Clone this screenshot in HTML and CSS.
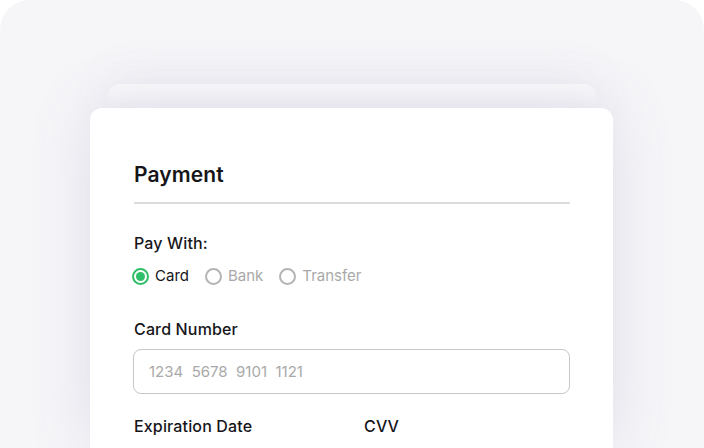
FILE: index.html
```html
<!DOCTYPE html>
<html>
<head>
<meta charset="utf-8">
<link rel="stylesheet" href="styles.css">
</head>
<body>
<div class="stage">
  <div class="card-back"></div>
  <div class="card">
    <h1 class="title">Payment</h1>
    <div class="divider"></div>
    <div class="label pay-label">Pay With:</div>
    <div class="radios">
      <span class="radio checked"><span class="dot"></span><span class="rtext">Card</span></span>
      <span class="radio"><span class="dot"></span><span class="rtext">Bank</span></span>
      <span class="radio"><span class="dot"></span><span class="rtext">Transfer</span></span>
    </div>
    <div class="label num-label">Card Number</div>
    <div class="input"><span class="placeholder">1234&nbsp; 5678&nbsp; 9101&nbsp; 1121</span></div>
    <div class="row">
      <div class="label exp">Expiration Date</div>
      <div class="label">CVV</div>
    </div>
  </div>
</div>
</body>
</html>
```
FILE: styles.css
```css
html, body {
  margin: 0;
  padding: 0;
  background: #ffffff;
}
body {
  font-family: Inter, "Noto Sans", sans-serif;
  color: #16161a;
}
.stage {
  width: 704px;
  height: 448px;
  background: #f6f6f9;
  border-radius: 30px 30px 0 0;
  overflow: hidden;
  display: flex;
  flex-direction: column;
  align-items: center;
  padding-top: 84px;
  box-sizing: border-box;
}
.card-back {
  width: 488px;
  height: 24px;
  flex: none;
  border-radius: 12px 12px 0 0;
  background: linear-gradient(#fafafc, #f3f3f7);
  box-shadow: 0 0 50px rgba(110, 100, 150, 0.12);
}
.card {
  width: 523px;
  flex: 1;
  margin-left: -1px;
  background: #ffffff;
  border-radius: 12px 12px 0 0;
  box-shadow: 0 0 60px rgba(110, 100, 150, 0.17);
  padding: 53px 43px 0 44px;
  box-sizing: border-box;
  display: flex;
  flex-direction: column;
}
.title {
  margin: 0;
  font-size: 21px;
  line-height: 28px;
  font-weight: 600;
  letter-spacing: 0.1px;
}
.divider {
  height: 2px;
  background: #dcdcdc;
  margin-top: 13px;
}
.label {
  font-size: 16px;
  line-height: 20px;
  font-weight: 500;
  letter-spacing: 0.15px;
}
.pay-label {
  margin-top: 29px;
}
.radios {
  display: flex;
  gap: 16px;
  margin-top: 13px;
  margin-left: -2px;
}
.radio {
  display: flex;
  align-items: center;
  gap: 6px;
  font-size: 15px;
  line-height: 20px;
  color: #a9a9a9;
}
.dot {
  width: 17px;
  height: 17px;
  box-sizing: border-box;
  border: 2px solid #b4b4b4;
  border-radius: 50%;
  display: flex;
  align-items: center;
  justify-content: center;
}
.radio.checked {
  color: #16161a;
}
.radio.checked .dot {
  border-color: #2fbe6a;
}
.radio.checked .dot::after {
  content: "";
  width: 9px;
  height: 9px;
  border-radius: 50%;
  background: #2fbe6a;
}
.num-label {
  margin-top: 33px;
}
.input {
  margin-top: 10px;
  margin-left: -1px;
  height: 45px;
  box-sizing: border-box;
  border: 1.5px solid #c6c6c6;
  border-radius: 8px;
  display: flex;
  align-items: center;
  padding-left: 15px;
}
.placeholder {
  font-size: 15px;
  color: #a9a9a9;
}
.row {
  display: flex;
  margin-top: 22px;
}
.exp {
  width: 230px;
}
```
